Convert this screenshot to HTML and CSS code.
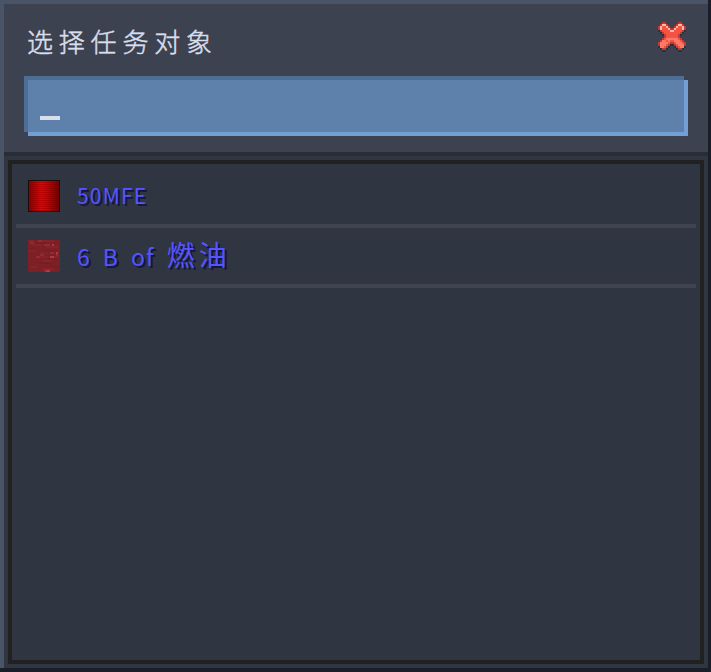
FILE: index.html
```html
<!DOCTYPE html>
<html lang="zh-CN">
<head>
<meta charset="utf-8">
<title>选择任务对象</title>
<link rel="stylesheet" href="styles.css">
</head>
<body>
<main class="window">
  <header class="header">
    <div class="titlebar">
      <h1 class="title">选择任务对象</h1>
      <button class="close" aria-label="关闭">
        <svg width="28" height="30" viewBox="0 0 14 15" shape-rendering="crispEdges">
          <path fill="#2b303c" d="M2 1h3v1h1v1h1v1h1v-1h1v-1h1v-1h3v1h1v3h-1v1h-1v1h-1v1h1v1h1v1h1v3h-1v1h-1v1h-2v-1h-1v-1h-1v-1h-2v1h-1v1h-1v1h-2v-1h-1v-1h-1v-3h1v-1h1v-1h1v-1h-1v-1h-1v-1h-1v-3h2z"/>
          <path fill="#c23a32" d="M2 0h2v1h1v1h1v1h2v-1h1v-1h1v-1h2v1h1v1h1v2h-1v1h-1v1h-1v2h1v1h1v1h1v2h-1v1h-1v1h-2v-1h-1v-1h-1v-1h-2v1h-1v1h-1v1h-2v-1h-1v-1h-1v-2h1v-1h1v-1h1v-2h-1v-1h-1v-1h-1v-2h1v-1h1z"/>
          <path fill="#f25343" d="M2 1h2v1h1v1h1v1h2v-1h1v-1h1v-1h2v1h1v2h-1v1h-1v1h-1v2h1v1h1v1h1v2h-1v1h-2v-1h-1v-1h-1v-1h-2v1h-1v1h-1v1h-2v-1h-1v-2h1v-1h1v-1h1v-2h-1v-1h-1v-1h-1v-2h1z"/>
          <path fill="#ffb4a8" d="M2 1h2v1h1v1h1v1h2v1h-2v-1h-1v-1h-1v-1h-2v2h-1v-2h1zM10 1h2v1h1v2h-1v-2h-2v1h-1v1h-1v-1h1v-1h1z"/>
          <path fill="#ff7868" d="M3 9h1v1h1v1h-1v1h-1v1h-2v-3h1v-1h1zM4 8h6v1h1v1h1v1h1v2h-2v-1h-1v-1h-1v-1h-1v-1h-2v1h-1v-1h-1z"/>
        </svg>
      </button>
    </div>
    <div class="search"><span class="caret"></span></div>
  </header>
  <section class="body">
    <ul class="list">
      <li class="row">
        <svg class="icon" width="32" height="32" viewBox="0 0 32 32" shape-rendering="crispEdges">
          <defs>
            <linearGradient id="energy"><stop offset="0" stop-color="#900000"/><stop offset=".42" stop-color="#f00000"/><stop offset=".6" stop-color="#d00000"/><stop offset="1" stop-color="#780000"/></linearGradient>
            <pattern id="lines" width="2" height="2" patternUnits="userSpaceOnUse"><path fill="#500000" opacity=".28" d="M0 0h2v1h-2z"/></pattern>
          </defs>
          <path fill="#1b0c0e" d="M0 0h32v32H0z"/>
          <path fill="url(#energy)" d="M1 1h30v30H1z"/>
          <path fill="url(#lines)" d="M1 1h30v30H1z"/>
        </svg>
        <span class="name energy">50MFE</span>
      </li>
      <li class="row">
        <svg class="icon" width="32" height="32" viewBox="0 0 16 16" shape-rendering="crispEdges">
          <path fill="#7c2026" d="M0 0h16v16H0z"/>
          <path fill="#84232a" d="M0 0h3v1h-3zM6 0h7v1h-7zM2 2h5v1h-5zM9 3h6v1h-6zM0 5h4v1h-4zM6 6h4v1h-4zM4 8h6v1h-6zM11 8h4v1h-4zM7 10h5v1h-5zM1 13h4v1h-4zM7 14h6v1h-6z"/>
          <path fill="#761e24" d="M0 4h3v1h-3zM4 1h5v1h-5zM8 5h5v1h-5zM10 9h5v1h-5zM5 11h7v1h-7zM11 13h5v1h-5z"/>
          <path fill="#952a30" d="M5 0h2v1h-2zM1 1h2v1h-2zM8 2h3v1h-3zM11 6h2v1h-2zM6 7h2v1h-2zM4 8h2v1h-2zM14 7h1v1h-1zM8 15h3v1h-3z"/>
          <path fill="#bc343a" d="M12 2h1v1h-1zM14 6h1v1h-1zM11 8h2v1h-2zM9 15h2v1h-2z"/>
        </svg>
        <span class="name fluid">6 B of <span class="cjk">燃油</span></span>
      </li>
    </ul>
  </section>
</main>
</body>
</html>
```

FILE: styles.css
```css
* { box-sizing: border-box; }
body {
  margin: 0;
  width: 711px;
  height: 672px;
  overflow: hidden;
  background: #1b1e29;
  font-family: "Noto Sans CJK SC", sans-serif;
}
.window {
  width: 708px;
  height: 668px;
  border-top: 4px solid #495567;
  border-left: 4px solid #495567;
  background: #2f3541;
  display: flex;
  flex-direction: column;
}
.header {
  height: 152px;
  flex: none;
  padding: 18px 20px 16px;
  background: #3d4250;
  border-bottom: 4px solid #2a2d38;
}
.titlebar {
  height: 54px;
  display: flex;
  justify-content: space-between;
  align-items: flex-start;
}
.title {
  margin: 0 0 0 3px;
  font-size: 26px;
  line-height: 37px;
  font-weight: 300;
  letter-spacing: 5.8px;
  color: #d8deeb;
  -webkit-text-stroke: 0.5px #d8deeb;
  white-space: nowrap;
}
.close {
  width: 28px;
  height: 30px;
  margin-right: 2px;
  padding: 0;
  border: 0;
  background: none;
}
.close svg, .icon { display: block; flex: none; }
.search {
  height: 60px;
  padding: 36px 12px 0;
  background:
    linear-gradient(#4f6e96, #4f6e96) 0 0 / 660px 4px no-repeat,
    linear-gradient(#4f6e96, #4f6e96) 0 0 / 4px 56px no-repeat,
    linear-gradient(#739fd6, #739fd6) 4px 56px / 660px 4px no-repeat,
    linear-gradient(#739fd6, #739fd6) 660px 4px / 4px 56px no-repeat,
    linear-gradient(#5e81ac, #5e81ac) 4px 4px / 656px 52px no-repeat;
}
.caret {
  display: block;
  width: 20px;
  height: 4px;
  margin: 4px 0 0 4px;
  background: #d8deeb;
}
.body {
  flex: 1;
  padding: 4px;
}
.list {
  height: 100%;
  margin: 0;
  padding: 4px;
  list-style: none;
  border: 4px solid #212121;
}
.row {
  height: 60px;
  padding: 0 12px;
  display: flex;
  align-items: center;
  gap: 17px;
  border-bottom: 4px solid #404450;
}
.name {
  color: #5555ff;
  text-shadow: 2px 2px 0 #15153f;
  white-space: pre;
  font-weight: 400;
  line-height: 38px;
  padding-bottom: 2px;
}
.energy {
  font-size: 21px;
  letter-spacing: 1.2px;
}
.fluid {
  font-size: 23px;
  letter-spacing: 1.2px;
  word-spacing: 5.5px;
}
.cjk {
  font-size: 28px;
  letter-spacing: 4px;
}
```
